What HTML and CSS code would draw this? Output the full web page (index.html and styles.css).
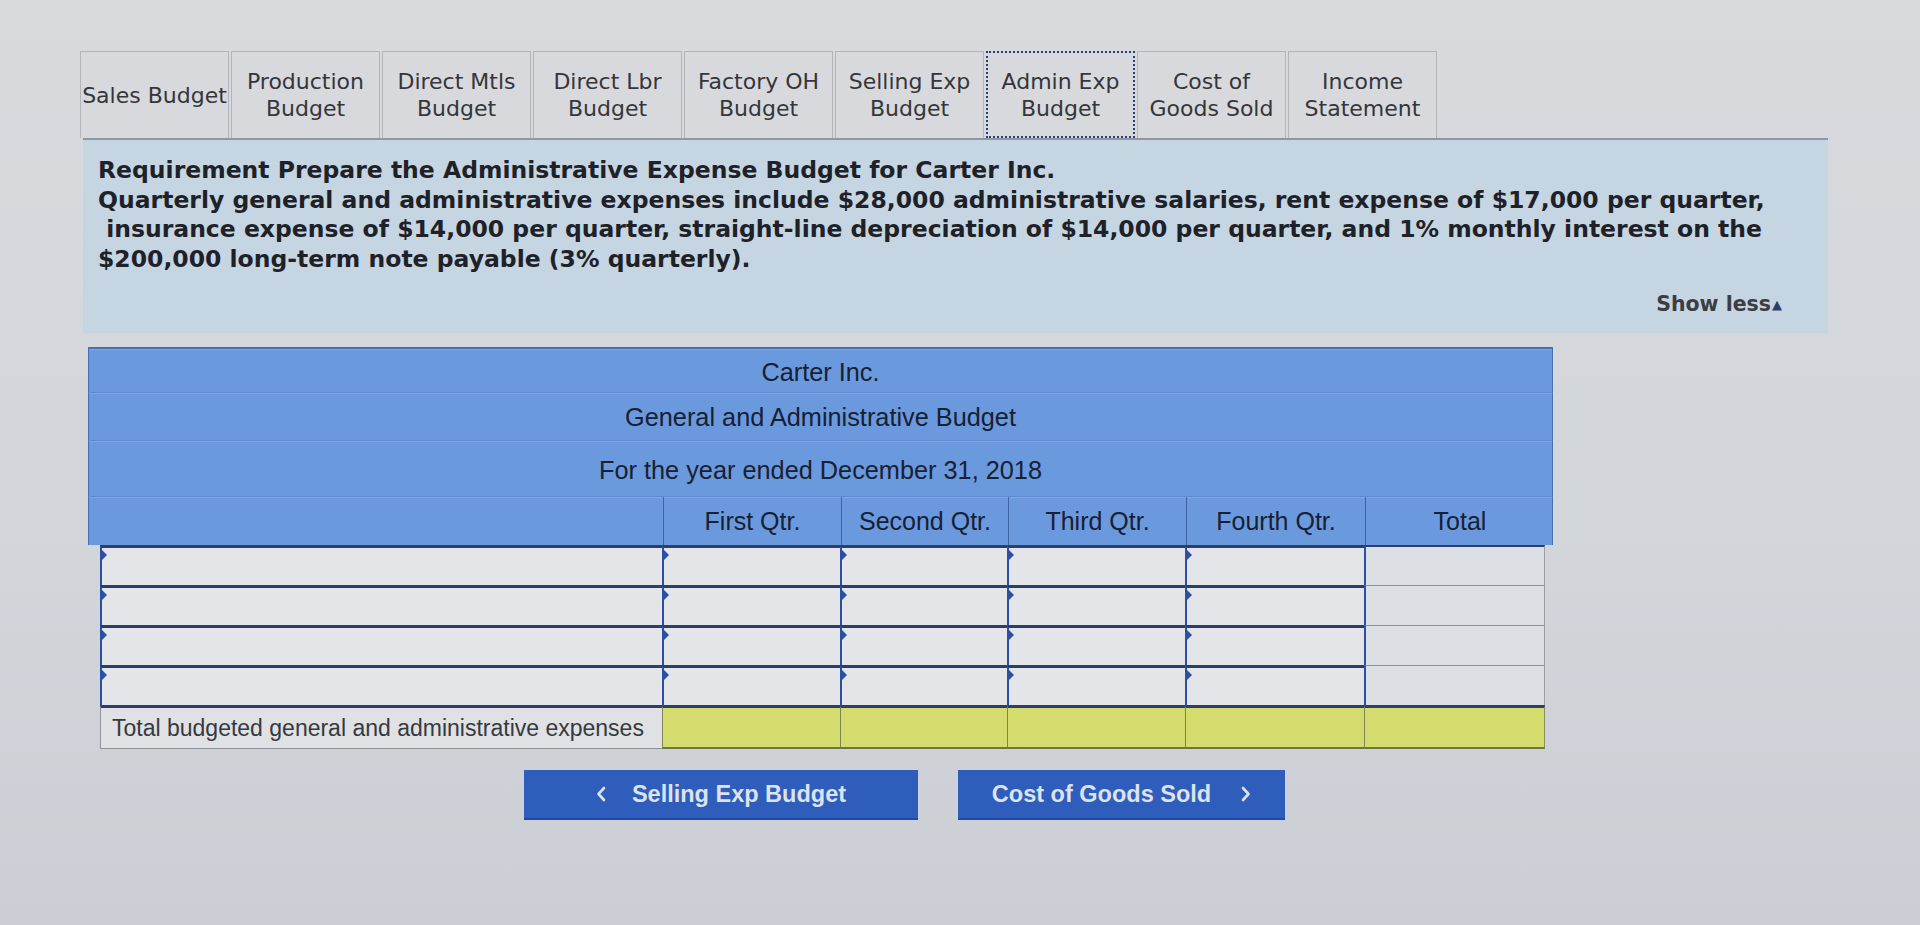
FILE: index.html
```html
<!DOCTYPE html>
<html lang="en">
<head>
<meta charset="utf-8">
<title>Admin Exp Budget</title>
<link rel="stylesheet" href="styles.css">
</head>
<body>
<div class="page">
  <nav class="tabs">
    <div class="tab">Sales Budget</div>
    <div class="tab">Production<br>Budget</div>
    <div class="tab">Direct Mtls<br>Budget</div>
    <div class="tab">Direct Lbr<br>Budget</div>
    <div class="tab">Factory OH<br>Budget</div>
    <div class="tab">Selling Exp<br>Budget</div>
    <div class="tab active">Admin Exp<br>Budget</div>
    <div class="tab">Cost of<br>Goods Sold</div>
    <div class="tab">Income<br>Statement</div>
  </nav>

  <section class="req">
    <p class="req-text">Requirement Prepare the Administrative Expense Budget for Carter Inc.<br>Quarterly general and administrative expenses include $28,000 administrative salaries, rent expense of $17,000 per quarter,<br>&nbsp;insurance expense of $14,000 per quarter, straight-line depreciation of $14,000 per quarter, and 1% monthly interest on the<br>$200,000 long-term note payable (3% quarterly).</p>
    <div class="show-less">Show less<span class="tri">&#9650;</span></div>
  </section>

  <div class="budget">
    <div class="hrow h1">Carter Inc.</div>
    <div class="hrow h2">General and Administrative Budget</div>
    <div class="hrow h3">For the year ended December 31, 2018</div>
    <div class="hcols">
      <div class="hc"></div>
      <div class="hc">First Qtr.</div>
      <div class="hc">Second Qtr.</div>
      <div class="hc">Third Qtr.</div>
      <div class="hc">Fourth Qtr.</div>
      <div class="hc">Total</div>
    </div>
    <div class="brow">
      <div class="cell in"></div><div class="cell in"></div><div class="cell in"></div><div class="cell in"></div><div class="cell in"></div><div class="cell tot"></div>
    </div>
    <div class="brow">
      <div class="cell in"></div><div class="cell in"></div><div class="cell in"></div><div class="cell in"></div><div class="cell in"></div><div class="cell tot"></div>
    </div>
    <div class="brow">
      <div class="cell in"></div><div class="cell in"></div><div class="cell in"></div><div class="cell in"></div><div class="cell in"></div><div class="cell tot"></div>
    </div>
    <div class="brow">
      <div class="cell in"></div><div class="cell in"></div><div class="cell in"></div><div class="cell in"></div><div class="cell in"></div><div class="cell tot"></div>
    </div>
    <div class="brow total">
      <div class="cell lbl">Total budgeted general and administrative expenses</div>
      <div class="cell yl"></div><div class="cell yl"></div><div class="cell yl"></div><div class="cell yl"></div><div class="cell yl"></div>
    </div>
  </div>

  <div class="navbtns">
    <button class="btn prev"><svg class="chev" viewBox="0 0 10 16" width="10" height="16"><path d="M8 2 L2.5 8 L8 14" fill="none" stroke="currentColor" stroke-width="2.6" stroke-linecap="round" stroke-linejoin="round"/></svg><span>Selling Exp Budget</span></button>
    <button class="btn next"><span>Cost of Goods Sold</span><svg class="chev" viewBox="0 0 10 16" width="10" height="16"><path d="M2 2 L7.5 8 L2 14" fill="none" stroke="currentColor" stroke-width="2.6" stroke-linecap="round" stroke-linejoin="round"/></svg></button>
  </div>
</div>
</body>
</html>
```

FILE: styles.css
```css
html, body {
  margin: 0;
  padding: 0;
}
body {
  width: 1920px;
  height: 925px;
  overflow: hidden;
  background: linear-gradient(180deg, #d8dade 0%, #d2d5da 60%, #cbced4 100%);
  font-family: "DejaVu Sans", Verdana, sans-serif;
  color: #2f3136;
}
.page {
  padding: 51px 0 0 80px;
}

/* Tabs */
.tabs {
  display: flex;
  gap: 2px;
  height: 87px;
}
.tab {
  box-sizing: border-box;
  width: 149px;
  height: 87px;
  background: #d8d9dc;
  border: 1px solid #b2b5ba;
  border-bottom: none;
  display: flex;
  align-items: center;
  justify-content: center;
  text-align: center;
  font-size: 22px;
  line-height: 27px;
  color: #34363b;
  white-space: nowrap;
}
.tab.active {
  border: 2px dotted #2a3d7a;
}

/* Requirement panel */
.req {
  box-sizing: border-box;
  margin-left: 3px;
  width: 1745px;
  height: 195px;
  background: #c5d5e2;
  border-top: 2px solid #8e98a3;
  padding: 16px 46px 0 15px;
}
.req-text {
  margin: 0;
  font-weight: bold;
  font-size: 23.5px;
  line-height: 29.7px;
  color: #1e2228;
  white-space: nowrap;
}
.show-less {
  margin-top: 16px;
  text-align: right;
  font-size: 20.5px;
  font-weight: bold;
  line-height: 26px;
  color: #3b3d42;
}
.show-less .tri {
  font-size: 13px;
  color: #2e3f6e;
  vertical-align: 2px;
  margin-left: 1px;
}

/* Budget table */
.budget {
  margin: 14px 0 0 8px;
  width: 1465px;
  font-family: "Liberation Sans", Arial, sans-serif;
  color: #182033;
}
.hrow {
  box-sizing: border-box;
  background: #6a99de;
  border-left: 1px solid #4a6fae;
  border-right: 1px solid #4a6fae;
  border-bottom: 1px solid #5f8bcc;
  box-shadow: inset 0 1px 0 #7ea8e4;
  text-align: center;
  font-size: 25.3px;
}
.h1 {
  height: 46px;
  line-height: 46px;
  border-top: 2px solid #4a6fae;
}
.h2 {
  height: 48px;
  line-height: 48px;
}
.h3 {
  height: 56px;
  line-height: 58px;
}
.hcols {
  display: grid;
  grid-template-columns: 574px 178px 167px 178px 179px 189px;
  height: 48px;
  background: #6a99de;
  border-left: 1px solid #4a6fae;
  border-right: 1px solid #4a6fae;
  box-sizing: border-box;
  box-shadow: inset 0 1px 0 #7ea8e4;
}
.hc {
  font-size: 25px;
  line-height: 48px;
  text-align: center;
  border-left: 1px solid #3f62a0;
  white-space: nowrap;
}
.hc:first-child {
  border-left: none;
}
.brow {
  display: grid;
  grid-template-columns: 562px 178px 167px 178px 179px 181px;
  margin: 0 8px 0 12px;
  height: 40px;
}
.cell {
  box-sizing: border-box;
  position: relative;
}
.cell.in {
  background: #e3e5e8;
  border-top: 3px solid #2c3e6c;
  border-left: 2px solid #2b4fa2;
}
.cell.in::before {
  content: "";
  position: absolute;
  left: 0;
  top: 2px;
  border-style: solid;
  border-width: 5px 0 5px 5px;
  border-color: transparent transparent transparent #2b4fa2;
}
.cell.tot {
  background: #dcdfe3;
  border-top: 1px solid #8c9096;
  border-left: 2px solid #2b4fa2;
  border-right: 1px solid #9a9da2;
}
.brow:nth-child(5) .cell.tot {
  border-top: 2px solid #2c3e6c;
}
.brow.total {
  height: 43px;
}
.cell.lbl {
  background: #dfe1e4;
  border-top: 3px solid #2c3e6c;
  border-left: 1px solid #8e9196;
  border-bottom: 1px solid #8e9196;
  font-size: 23px;
  line-height: 40px;
  padding-left: 11px;
  color: #363940;
  white-space: nowrap;
}
.cell.yl {
  background: #d4dc6e;
  border-top: 3px solid #2c3e6c;
  border-left: 1px solid #7f8552;
  border-bottom: 2px solid #6f7449;
}
.cell.yl:last-child {
  border-right: 1px solid #8a8f5a;
}

/* Nav buttons */
.navbtns {
  display: flex;
  gap: 40px;
  margin: 22px 0 0 444px;
}
.btn {
  box-sizing: border-box;
  height: 50px;
  border: none;
  border-bottom: 2px solid #234a9c;
  background: #2f5dbc;
  color: #dde2ef;
  font-family: "Liberation Sans", Arial, sans-serif;
  font-weight: bold;
  font-size: 23.5px;
  display: flex;
  align-items: center;
  justify-content: center;
  gap: 26px;
  padding: 0;
}
.btn.prev {
  width: 394px;
}
.btn.next {
  width: 327px;
  gap: 30px;
}
.chev {
  display: block;
}
```
